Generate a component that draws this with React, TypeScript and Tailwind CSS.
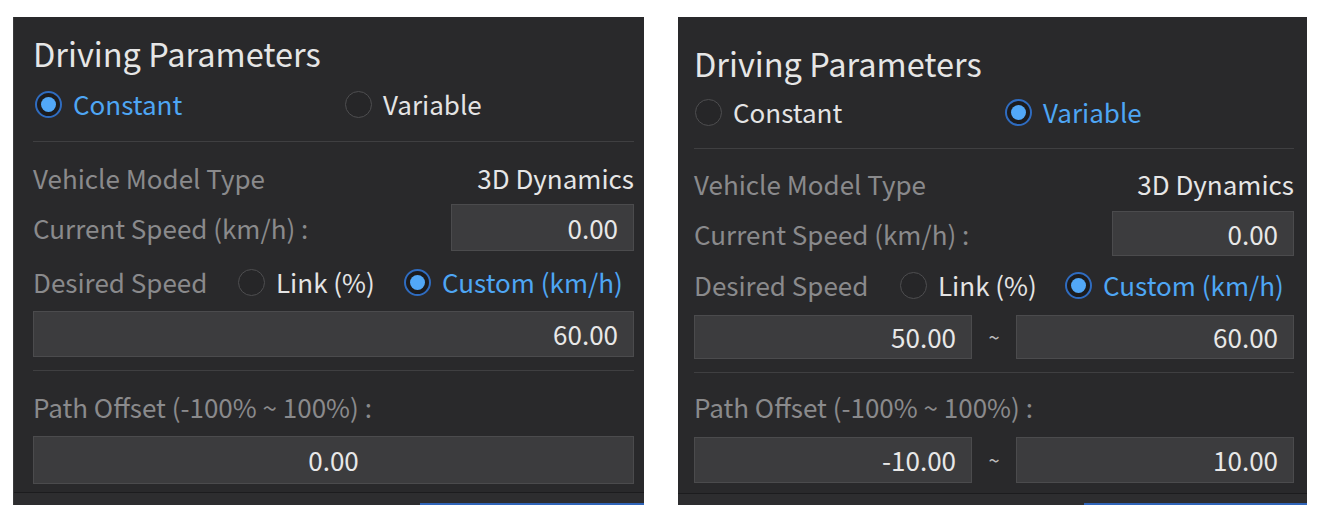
import React from "react";

const FONT = { fontFamily: '"Noto Sans CJK KR", "Noto Sans", sans-serif' };

function Radio({ checked, label, className = "" }: { checked: boolean; label: string; className?: string }) {
  return (
    <div className={"flex items-center " + className}>
      {checked ? (
        <div className="w-[27px] h-[27px] rounded-full border-[2px] border-[#2f6cc0] bg-[#1c1c1e] flex items-center justify-center shrink-0">
          <div className="w-[15px] h-[15px] rounded-full bg-[#52a8f7]" />
        </div>
      ) : (
        <div className="w-[27px] h-[27px] rounded-full border border-[#4e4e50] bg-[#262628] shrink-0" />
      )}
      <span className={"ml-[11px] text-[26px] leading-none " + (checked ? "text-[#4ea6f4]" : "text-[#e4e4e4]")}>{label}</span>
    </div>
  );
}

function Box({ value, className = "", center = false }: { value: string; className?: string; center?: boolean }) {
  return (
    <div
      className={
        "bg-[#3c3c3e] border border-[#4b4b4d] flex items-center text-[26px] leading-none text-[#e8e8e8] " +
        (center ? "justify-center " : "justify-end pr-[15px] ") +
        className
      }
    >
      {value}
    </div>
  );
}

function Label({ children, className = "" }: { children: React.ReactNode; className?: string }) {
  return <span className={"text-[26px] leading-none text-[#8a8a8c] " + className}>{children}</span>;
}

function Footer() {
  return (
    <div className="flex-1 border-t border-[#1c1c1e] bg-[#2d2d2f] flex flex-col justify-end">
      <div className="flex">
        <div className="w-[406px]" />
        <div className="flex-1 h-[2px] bg-[#2f64b8]" />
      </div>
    </div>
  );
}

function LeftPanel() {
  return (
    <div className="w-[631px] h-[488px] bg-[#29292b] border-l border-[#3a3a3c] flex flex-col">
      <div className="pl-[19px] pr-[10px] pt-[17px] flex flex-col">
        <div className="h-[38px] flex items-center text-[32.5px] leading-none text-[#e6e6e6]">Driving Parameters</div>
        <div className="h-[40px] mt-[12px] flex items-center pl-[2px]">
          <Radio checked label="Constant" className="w-[310px]" />
          <Radio checked={false} label="Variable" />
        </div>
        <div className="h-px mt-[17px] bg-[#3f3f41]" />
        <div className="h-[52px] mt-[10px] flex items-center justify-between">
          <Label>Vehicle Model Type</Label>
          <span className="text-[26px] leading-none text-[#e6e6e6]">3D Dynamics</span>
        </div>
        <div className="h-[47px] flex items-center justify-between">
          <Label>Current Speed (km/h) :</Label>
          <Box value="0.00" className="w-[183px] h-[47px]" />
        </div>
        <div className="h-[52px] mt-[5px] flex items-center">
          <Label className="w-[205px]">Desired Speed</Label>
          <Radio checked={false} label="Link (%)" className="w-[166px]" />
          <Radio checked label="Custom (km/h)" />
        </div>
        <Box value="60.00" className="h-[46px] mt-[3px]" />
        <div className="h-px mt-[13px] bg-[#3f3f41]" />
        <div className="h-[52px] mt-[10px] flex items-center">
          <Label>Path Offset (-100% ~ 100%) :</Label>
        </div>
        <Box value="0.00" center className="h-[48px] mt-[3px]" />
        <div className="h-[8px]" />
      </div>
      <Footer />
    </div>
  );
}

function RightPanel() {
  return (
    <div className="w-[629px] h-[488px] bg-[#29292b] flex flex-col">
      <div className="pl-[16px] pr-[13px] pt-[27px] flex flex-col">
        <div className="h-[38px] flex items-center text-[32.5px] leading-none text-[#e6e6e6]">Driving Parameters</div>
        <div className="h-[40px] mt-[10px] flex items-center pl-[1px]">
          <Radio checked={false} label="Constant" className="w-[310px]" />
          <Radio checked label="Variable" />
        </div>
        <div className="h-px mt-[16px] bg-[#3f3f41]" />
        <div className="h-[52px] mt-[9px] flex items-center justify-between">
          <Label>Vehicle Model Type</Label>
          <span className="text-[26px] leading-none text-[#e6e6e6]">3D Dynamics</span>
        </div>
        <div className="h-[45px] mt-[1px] flex items-center justify-between">
          <Label>Current Speed (km/h) :</Label>
          <Box value="0.00" className="w-[182px] h-[45px]" />
        </div>
        <div className="h-[52px] mt-[3px] flex items-center">
          <Label className="w-[206px]">Desired Speed</Label>
          <Radio checked={false} label="Link (%)" className="w-[165px]" />
          <Radio checked label="Custom (km/h)" />
        </div>
        <div className="h-[44px] mt-[4px] flex items-center">
          <Box value="50.00" className="w-[278px] h-[44px]" />
          <div className="flex-1 flex items-center justify-center text-[20px] text-[#bdbdbd]">~</div>
          <Box value="60.00" className="w-[278px] h-[44px]" />
        </div>
        <div className="h-px mt-[13px] bg-[#3f3f41]" />
        <div className="h-[52px] mt-[8px] flex items-center">
          <Label>Path Offset (-100% ~ 100%) :</Label>
        </div>
        <div className="h-[46px] mt-[4px] flex items-center">
          <Box value="-10.00" className="w-[278px] h-[46px]" />
          <div className="flex-1 flex items-center justify-center text-[20px] text-[#bdbdbd]">~</div>
          <Box value="10.00" className="w-[278px] h-[46px]" />
        </div>
        <div className="h-[10px]" />
      </div>
      <Footer />
    </div>
  );
}

export default function App() {
  return (
    <div className="w-[1323px] h-[522px] bg-white flex items-start pt-[17px] pl-[13px]" style={FONT}>
      <LeftPanel />
      <div className="w-[34px]" />
      <RightPanel />
    </div>
  );
}
